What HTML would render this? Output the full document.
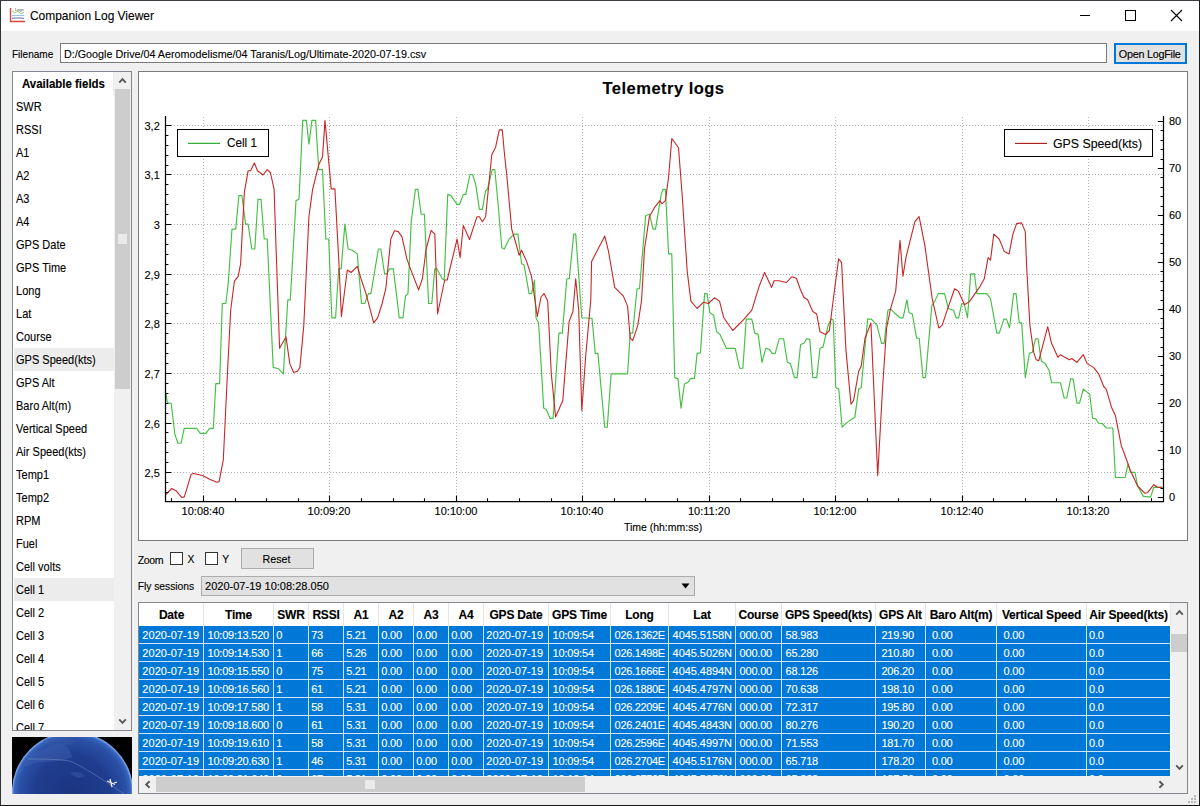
<!DOCTYPE html>
<html><head><meta charset="utf-8"><style>
html,body{margin:0;padding:0;width:1200px;height:806px;overflow:hidden;background:#f0f0f0}
.r{position:absolute}
.t{position:absolute;white-space:nowrap;font-family:"Liberation Sans", sans-serif;-webkit-text-stroke:0.12px currentColor}
</style></head><body>
<div class="r" style="left:0px;top:0px;width:1200px;height:806px;background:#f0f0f0;"></div>
<div class="r" style="left:1px;top:1px;width:1198px;height:30px;background:#ffffff;"></div>
<div class="r" style="left:0px;top:0px;width:1200px;height:1px;background:#3a3c44;"></div>
<div class="r" style="left:0px;top:0px;width:1px;height:806px;background:#2c3438;"></div>
<div class="r" style="left:1199px;top:0px;width:1px;height:806px;background:#1c1c1c;"></div>
<div class="r" style="left:0px;top:805px;width:1200px;height:1px;background:#141414;"></div>
<svg class="r" style="left:8px;top:6px" width="20" height="18" viewBox="0 0 20 18">
<path d="M2.5 2 V15.5 H17" stroke="#d64545" stroke-width="1.4" fill="none"/>
<path d="M4 5 L7 7 L10 5 L13 8 L16 6" stroke="#8fd08f" stroke-width="1" fill="none"/>
<path d="M4 9.5 H16" stroke="#8fc8e8" stroke-width="1" fill="none"/>
<path d="M4 12.5 L6 12 H14 L16 12.5" stroke="#5060a0" stroke-width="0.9" fill="none"/>
<text x="7" y="5" font-size="4" font-family="Liberation Sans" fill="#444">Logs</text>
</svg>
<div class="t" style="left:30.00px;top:10.89px;font-size:11.95px;line-height:11.95px;font-weight:400;color:#000;letter-spacing:0.000px">Companion Log Viewer</div>
<div class="r" style="left:1080px;top:15px;width:10px;height:1px;background:#000;"></div>
<div class="r" style="left:1125px;top:10px;width:11px;height:11px;border:1px solid #000;box-sizing:border-box;"></div>
<svg class="r" style="left:1170px;top:9px" width="13" height="13" viewBox="0 0 13 13"><path d="M1 1 L12 12 M12 1 L1 12" stroke="#000" stroke-width="1.1"/></svg>
<div class="t" style="left:11.80px;top:49.33px;font-size:10.72px;line-height:10.72px;font-weight:400;color:#000;letter-spacing:0.000px;transform:scaleX(0.9346);transform-origin:0 0">Filename</div>
<div class="r" style="left:60px;top:43px;width:1047px;height:20px;background:#fff;border:1px solid #7a7a7a;box-sizing:border-box;"></div>
<div class="t" style="left:63.50px;top:48.92px;font-size:11.20px;line-height:11.20px;font-weight:400;color:#000;letter-spacing:0.000px;transform:scaleX(0.9615);transform-origin:0 0">D:/Google Drive/04 Aeromodelisme/04 Taranis/Log/Ultimate-2020-07-19.csv</div>
<div class="r" style="left:1114px;top:43px;width:73px;height:21px;background:#e1e1e1;border:2px solid #0078d7;box-sizing:border-box;"></div>
<div class="t" style="left:1118.80px;top:49.16px;font-size:10.80px;line-height:10.80px;font-weight:400;color:#000;letter-spacing:-0.252px">Open LogFile</div>
<div class="r" style="left:12px;top:71px;width:120px;height:660px;background:#fff;border:1px solid #828790;box-sizing:border-box;"></div>
<div class="r" style="left:113px;top:72px;width:1px;height:23px;background:#ececec;"></div>
<div class="t" style="left:22.20px;top:77.93px;font-size:12.60px;line-height:12.60px;font-weight:700;color:#000;letter-spacing:0.000px;transform:scaleX(0.9091);transform-origin:0 0">Available fields</div>
<div class="r" style="left:14px;top:348px;width:100px;height:23px;background:#ececec;"></div>
<div class="r" style="left:14px;top:578px;width:100px;height:23px;background:#ececec;"></div>
<div class="r" style="left:13px;top:95px;width:101px;height:635px;overflow:hidden">
<div class="t" style="left:3.20px;top:5.57px;font-size:12.32px;line-height:12.32px;font-weight:400;color:#000;letter-spacing:0.022px;transform:scaleX(0.8929);transform-origin:0 0">SWR</div>
<div class="t" style="left:3.20px;top:28.57px;font-size:12.32px;line-height:12.32px;font-weight:400;color:#000;letter-spacing:0.022px;transform:scaleX(0.8929);transform-origin:0 0">RSSI</div>
<div class="t" style="left:3.20px;top:51.57px;font-size:12.32px;line-height:12.32px;font-weight:400;color:#000;letter-spacing:0.022px;transform:scaleX(0.8929);transform-origin:0 0">A1</div>
<div class="t" style="left:3.20px;top:74.57px;font-size:12.32px;line-height:12.32px;font-weight:400;color:#000;letter-spacing:0.022px;transform:scaleX(0.8929);transform-origin:0 0">A2</div>
<div class="t" style="left:3.20px;top:97.57px;font-size:12.32px;line-height:12.32px;font-weight:400;color:#000;letter-spacing:0.022px;transform:scaleX(0.8929);transform-origin:0 0">A3</div>
<div class="t" style="left:3.20px;top:120.57px;font-size:12.32px;line-height:12.32px;font-weight:400;color:#000;letter-spacing:0.022px;transform:scaleX(0.8929);transform-origin:0 0">A4</div>
<div class="t" style="left:3.20px;top:143.57px;font-size:12.32px;line-height:12.32px;font-weight:400;color:#000;letter-spacing:0.022px;transform:scaleX(0.8929);transform-origin:0 0">GPS Date</div>
<div class="t" style="left:3.20px;top:166.57px;font-size:12.32px;line-height:12.32px;font-weight:400;color:#000;letter-spacing:0.022px;transform:scaleX(0.8929);transform-origin:0 0">GPS Time</div>
<div class="t" style="left:3.20px;top:189.57px;font-size:12.32px;line-height:12.32px;font-weight:400;color:#000;letter-spacing:0.022px;transform:scaleX(0.8929);transform-origin:0 0">Long</div>
<div class="t" style="left:3.20px;top:212.57px;font-size:12.32px;line-height:12.32px;font-weight:400;color:#000;letter-spacing:0.022px;transform:scaleX(0.8929);transform-origin:0 0">Lat</div>
<div class="t" style="left:3.20px;top:235.57px;font-size:12.32px;line-height:12.32px;font-weight:400;color:#000;letter-spacing:0.022px;transform:scaleX(0.8929);transform-origin:0 0">Course</div>
<div class="t" style="left:3.20px;top:258.57px;font-size:12.32px;line-height:12.32px;font-weight:400;color:#000;letter-spacing:0.022px;transform:scaleX(0.8929);transform-origin:0 0">GPS Speed(kts)</div>
<div class="t" style="left:3.20px;top:281.57px;font-size:12.32px;line-height:12.32px;font-weight:400;color:#000;letter-spacing:0.022px;transform:scaleX(0.8929);transform-origin:0 0">GPS Alt</div>
<div class="t" style="left:3.20px;top:304.57px;font-size:12.32px;line-height:12.32px;font-weight:400;color:#000;letter-spacing:0.022px;transform:scaleX(0.8929);transform-origin:0 0">Baro Alt(m)</div>
<div class="t" style="left:3.20px;top:327.57px;font-size:12.32px;line-height:12.32px;font-weight:400;color:#000;letter-spacing:0.022px;transform:scaleX(0.8929);transform-origin:0 0">Vertical Speed</div>
<div class="t" style="left:3.20px;top:350.57px;font-size:12.32px;line-height:12.32px;font-weight:400;color:#000;letter-spacing:0.022px;transform:scaleX(0.8929);transform-origin:0 0">Air Speed(kts)</div>
<div class="t" style="left:3.20px;top:373.57px;font-size:12.32px;line-height:12.32px;font-weight:400;color:#000;letter-spacing:0.022px;transform:scaleX(0.8929);transform-origin:0 0">Temp1</div>
<div class="t" style="left:3.20px;top:396.57px;font-size:12.32px;line-height:12.32px;font-weight:400;color:#000;letter-spacing:0.022px;transform:scaleX(0.8929);transform-origin:0 0">Temp2</div>
<div class="t" style="left:3.20px;top:419.57px;font-size:12.32px;line-height:12.32px;font-weight:400;color:#000;letter-spacing:0.022px;transform:scaleX(0.8929);transform-origin:0 0">RPM</div>
<div class="t" style="left:3.20px;top:442.57px;font-size:12.32px;line-height:12.32px;font-weight:400;color:#000;letter-spacing:0.022px;transform:scaleX(0.8929);transform-origin:0 0">Fuel</div>
<div class="t" style="left:3.20px;top:465.57px;font-size:12.32px;line-height:12.32px;font-weight:400;color:#000;letter-spacing:0.022px;transform:scaleX(0.8929);transform-origin:0 0">Cell volts</div>
<div class="t" style="left:3.20px;top:488.57px;font-size:12.32px;line-height:12.32px;font-weight:400;color:#000;letter-spacing:0.022px;transform:scaleX(0.8929);transform-origin:0 0">Cell 1</div>
<div class="t" style="left:3.20px;top:511.57px;font-size:12.32px;line-height:12.32px;font-weight:400;color:#000;letter-spacing:0.022px;transform:scaleX(0.8929);transform-origin:0 0">Cell 2</div>
<div class="t" style="left:3.20px;top:534.57px;font-size:12.32px;line-height:12.32px;font-weight:400;color:#000;letter-spacing:0.022px;transform:scaleX(0.8929);transform-origin:0 0">Cell 3</div>
<div class="t" style="left:3.20px;top:557.57px;font-size:12.32px;line-height:12.32px;font-weight:400;color:#000;letter-spacing:0.022px;transform:scaleX(0.8929);transform-origin:0 0">Cell 4</div>
<div class="t" style="left:3.20px;top:580.57px;font-size:12.32px;line-height:12.32px;font-weight:400;color:#000;letter-spacing:0.022px;transform:scaleX(0.8929);transform-origin:0 0">Cell 5</div>
<div class="t" style="left:3.20px;top:603.57px;font-size:12.32px;line-height:12.32px;font-weight:400;color:#000;letter-spacing:0.022px;transform:scaleX(0.8929);transform-origin:0 0">Cell 6</div>
<div class="t" style="left:3.20px;top:626.57px;font-size:12.32px;line-height:12.32px;font-weight:400;color:#000;letter-spacing:0.022px;transform:scaleX(0.8929);transform-origin:0 0">Cell 7</div>
</div>
<div class="r" style="left:114px;top:72px;width:17px;height:658px;background:#f0f0f0;"></div>
<div class="r" style="left:115px;top:89px;width:15px;height:300px;background:#cdcdcd;"></div>
<div class="r" style="left:118px;top:234px;width:9px;height:10px;background:#eaeaea;"></div>
<svg class="r" style="left:117px;top:77px" width="11" height="7" viewBox="0 0 11 7"><path d="M2.2 5.6 L5.5 2.2 L8.8 5.6" stroke="#585858" stroke-width="1.9" fill="none"/></svg>
<svg class="r" style="left:117px;top:718px" width="11" height="7" viewBox="0 0 11 7"><path d="M2.2 1.4 L5.5 4.8 L8.8 1.4" stroke="#585858" stroke-width="1.9" fill="none"/></svg>
<svg class="r" style="left:12px;top:737px" width="120" height="57" viewBox="0 0 120 57">
<defs><radialGradient id="gl" cx="60.6" cy="55.6" r="60.7" gradientUnits="userSpaceOnUse">
<stop offset="0" stop-color="#1b3580"/><stop offset="0.6" stop-color="#1f3c8e"/><stop offset="0.88" stop-color="#2a50a6"/><stop offset="0.96" stop-color="#3766c0"/><stop offset="1" stop-color="#8fb6f4"/></radialGradient>
<clipPath id="gc"><circle cx="60.6" cy="55.6" r="60.7"/></clipPath></defs>
<rect width="120" height="57" fill="#000"/>
<circle cx="60.6" cy="55.6" r="60.7" fill="url(#gl)"/>
<g clip-path="url(#gc)">
<path d="M10 26 C18 18 28 12 42 8 C52 6 58 10 60 20 C52 25 38 24 22 26 C16 29 12 32 10 26 Z" fill="#3e5eae" opacity="0.5"/>
<path d="M30 2 C40 0 52 0 64 3 C62 8 54 10 44 9 C36 8 32 6 30 2 Z" fill="#3a5aa8" opacity="0.4"/>
<path d="M58 36 C62 34 70 35 73 39 C69 42 62 41 58 36 Z" fill="#3858aa" opacity="0.5"/>
<path d="M16 22 C30 22 45 22 58 24 C72 30 90 42 112 57" stroke="#9ab0dc" stroke-width="0.45" fill="none" opacity="0.8"/>
</g>
<path d="M95 44 L103 47.5 M98 42 L100 50 M102 46 L105 45" stroke="#f4f4f4" stroke-width="1.3"/>
</svg>
<div class="r" style="left:138px;top:71px;width:1050px;height:470px;background:#fff;border:1px solid #7a7a7a;box-sizing:border-box;"></div>
<div class="t" style="left:663.50px;top:79.83px;font-size:16.50px;line-height:16.50px;font-weight:700;color:#000;letter-spacing:0.483px;transform:translateX(-50%);transform-origin:50% 0">Telemetry logs</div>
<svg class="r" style="left:0;top:0" width="1200" height="806" viewBox="0 0 1200 806">
<line x1="203.5" y1="117" x2="203.5" y2="500" stroke="#b2b2b2" stroke-width="1" stroke-dasharray="1 2"/>
<line x1="329.5" y1="117" x2="329.5" y2="500" stroke="#b2b2b2" stroke-width="1" stroke-dasharray="1 2"/>
<line x1="456.5" y1="117" x2="456.5" y2="500" stroke="#b2b2b2" stroke-width="1" stroke-dasharray="1 2"/>
<line x1="582.5" y1="117" x2="582.5" y2="500" stroke="#b2b2b2" stroke-width="1" stroke-dasharray="1 2"/>
<line x1="709.5" y1="117" x2="709.5" y2="500" stroke="#b2b2b2" stroke-width="1" stroke-dasharray="1 2"/>
<line x1="835.5" y1="117" x2="835.5" y2="500" stroke="#b2b2b2" stroke-width="1" stroke-dasharray="1 2"/>
<line x1="962.5" y1="117" x2="962.5" y2="500" stroke="#b2b2b2" stroke-width="1" stroke-dasharray="1 2"/>
<line x1="1088.5" y1="117" x2="1088.5" y2="500" stroke="#b2b2b2" stroke-width="1" stroke-dasharray="1 2"/>
<line x1="168" y1="125.5" x2="1162" y2="125.5" stroke="#b2b2b2" stroke-width="1" stroke-dasharray="1 2"/>
<line x1="168" y1="174.5" x2="1162" y2="174.5" stroke="#b2b2b2" stroke-width="1" stroke-dasharray="1 2"/>
<line x1="168" y1="224.5" x2="1162" y2="224.5" stroke="#b2b2b2" stroke-width="1" stroke-dasharray="1 2"/>
<line x1="168" y1="274.5" x2="1162" y2="274.5" stroke="#b2b2b2" stroke-width="1" stroke-dasharray="1 2"/>
<line x1="168" y1="323.5" x2="1162" y2="323.5" stroke="#b2b2b2" stroke-width="1" stroke-dasharray="1 2"/>
<line x1="168" y1="373.5" x2="1162" y2="373.5" stroke="#b2b2b2" stroke-width="1" stroke-dasharray="1 2"/>
<line x1="168" y1="423.5" x2="1162" y2="423.5" stroke="#b2b2b2" stroke-width="1" stroke-dasharray="1 2"/>
<line x1="168" y1="472.5" x2="1162" y2="472.5" stroke="#b2b2b2" stroke-width="1" stroke-dasharray="1 2"/>
<polyline points="166.0,394.2 167.4,402.9 171.2,403.3 174.9,434.5 178.0,443.2 181.1,443.2 184.2,428.3 196.6,428.3 200.3,433.3 205.9,433.3 209.6,428.3 213.3,428.3 215.8,383.6 219.6,383.6 222.3,303.5 225.8,303.5 228.2,283.7 232.0,229.1 235.7,229.1 238.9,195.6 241.9,195.6 245.6,224.1 248.1,224.1 251.8,249.0 254.8,249.0 258.0,199.3 261.0,199.3 264.2,239.0 267.2,239.0 273.2,367.4 278.3,368.7 283.4,373.8 284.7,350.9 287.8,299.8 290.3,299.8 296.0,200.6 299.0,199.3 302.7,120.4 306.4,120.4 308.9,144.2 311.9,120.4 315.6,120.4 318.8,169.6 322.5,169.6 325.8,239.0 328.7,239.0 331.8,317.8 335.6,317.8 338.7,268.8 341.1,268.8 344.9,224.1 348.1,249.0 352.3,250.2 357.3,253.9 358.5,268.8 361.5,303.5 364.7,303.5 368.4,293.6 370.9,293.6 378.4,249.0 380.8,249.0 384.6,273.8 387.0,273.8 389.5,268.8 393.3,268.8 397.0,298.6 399.2,317.8 403.0,317.8 405.5,296.0 408.0,293.6 411.2,221.7 415.4,189.4 417.9,189.4 421.1,214.2 424.4,214.2 428.6,303.5 431.8,303.5 434.8,268.8 436.8,268.8 442.2,278.7 444.2,280.0 447.7,194.4 450.9,195.6 457.1,204.3 459.6,204.3 463.3,194.4 465.8,194.4 470.0,174.5 472.5,174.5 475.7,184.4 479.4,209.3 482.4,209.3 485.6,190.6 487.4,189.4 492.3,169.6 494.8,169.6 498.1,204.3 501.8,247.7 504.3,249.0 509.2,239.0 514.2,234.1 517.9,234.1 521.6,263.8 524.1,265.1 529.1,293.6 531.5,293.6 534.5,280.0 536.0,317.8 538.6,322.9 543.7,408.1 546.2,409.4 550.0,418.3 553.1,418.3 558.9,333.1 562.3,333.1 566.8,278.7 569.3,278.7 573.7,234.1 575.7,234.1 581.8,317.8 592.0,318.3 595.3,353.4 597.9,353.4 604.7,427.2 607.3,427.2 611.1,373.8 627.6,373.8 630.2,333.1 632.7,333.1 637.0,288.7 639.5,288.7 645.7,215.5 649.4,214.2 653.1,229.1 655.5,229.1 661.2,194.4 662.9,189.4 665.4,189.4 668.6,253.9 671.8,253.9 674.7,377.6 678.0,378.9 681.0,408.1 684.4,384.0 688.2,381.9 690.7,378.4 694.5,378.4 697.1,353.4 700.4,352.9 704.6,293.6 707.1,293.6 709.8,312.7 713.6,315.3 716.7,331.8 720.0,334.4 726.3,348.3 735.2,348.3 739.6,368.2 742.9,368.2 746.2,319.1 751.8,319.1 754.8,333.1 758.1,334.4 762.0,362.3 765.8,348.3 769.6,349.6 772.1,353.4 775.2,353.4 779.3,338.7 783.6,338.7 787.4,362.3 790.5,363.6 794.5,377.6 797.1,377.6 800.6,344.5 803.9,343.3 806.5,338.7 809.8,339.4 812.8,377.6 816.7,377.6 820.0,348.3 823.0,347.1 828.1,325.4 831.2,319.1 833.2,319.8 835.8,387.8 838.8,389.1 842.1,427.2 845.9,423.4 851.0,419.6 854.8,417.6 858.7,389.1 861.2,387.8 867.6,319.1 871.4,319.1 877.0,325.4 881.6,343.3 884.1,343.3 887.9,310.2 890.5,308.9 894.3,312.7 900.1,317.8 903.1,317.8 906.9,299.8 909.0,312.7 912.3,314.0 916.6,338.2 919.2,338.2 923.0,377.6 925.5,377.6 931.9,305.1 933.5,303.5 938.4,293.6 944.6,293.6 948.3,308.5 953.5,310.2 956.1,317.8 958.6,317.8 961.7,303.8 964.2,303.8 967.5,317.8 970.7,273.8 974.4,273.8 976.9,293.6 986.8,293.6 990.5,298.6 996.8,333.1 999.3,333.1 1003.9,319.1 1006.5,319.1 1009.5,328.0 1013.6,293.6 1016.1,293.6 1019.2,322.9 1021.7,322.9 1025.3,377.6 1029.4,353.4 1032.4,352.2 1035.5,338.7 1038.0,338.7 1041.3,361.1 1045.1,363.6 1048.9,370.0 1051.5,382.7 1060.4,382.7 1064.2,398.0 1066.8,398.0 1070.6,378.9 1073.1,378.9 1076.9,403.1 1079.5,403.1 1083.3,389.1 1089.7,394.1 1092.6,418.2 1095.9,418.9 1098.5,423.2 1102.4,423.5 1106.3,428.0 1112.8,428.0 1115.4,477.5 1125.2,477.5 1128.0,463.8 1130.4,472.3 1135.0,472.3 1137.6,486.0 1143.4,496.4 1150.6,497.1 1153.8,487.3 1162.3,487.3" fill="none" stroke="#44c044" stroke-width="1.15" stroke-linejoin="round"/>
<polyline points="165.6,494.8 171.6,488.5 176.4,491.1 181.7,497.4 184.3,496.9 191.2,474.2 193.8,473.5 203.3,475.8 210.1,479.5 217.0,482.2 219.1,481.6 223.3,460.0 227.6,370.0 230.7,310.0 234.4,281.2 238.2,276.3 240.6,263.8 244.4,191.9 248.1,170.8 250.6,170.8 254.3,162.9 257.5,170.8 263.0,175.0 267.2,169.6 270.4,172.5 274.1,189.4 276.1,249.0 279.6,348.3 286.0,336.9 289.8,363.6 293.6,372.5 297.4,371.2 299.9,367.4 303.8,325.4 308.9,216.7 312.6,189.4 318.8,164.6 322.5,157.1 325.0,120.4 331.2,188.9 334.9,188.9 338.7,258.9 341.4,316.5 347.3,270.0 351.1,272.5 357.3,266.3 361.0,278.7 366.0,293.6 373.7,322.9 377.6,317.8 382.1,303.5 385.8,288.7 390.8,239.0 394.5,230.8 398.2,231.6 401.9,236.6 406.9,258.9 410.0,267.6 418.6,289.9 422.4,278.7 426.1,249.0 431.1,230.3 434.8,234.1 437.6,314.0 444.7,280.0 447.2,280.0 457.1,239.0 460.1,257.6 463.3,225.4 469.5,239.5 477.0,216.7 479.4,216.7 482.4,221.7 485.6,216.7 491.8,154.7 495.6,147.2 499.3,129.9 502.3,129.9 504.3,152.2 506.7,174.5 511.7,229.1 515.4,241.5 519.1,255.2 521.6,250.2 526.6,261.4 531.5,276.3 537.3,316.5 541.0,297.0 544.0,293.6 547.7,301.1 551.3,373.8 555.6,417.0 562.8,400.5 569.1,321.6 572.9,311.5 575.7,278.7 578.7,310.0 581.8,410.7 585.7,356.0 590.8,300.0 591.6,261.4 604.8,236.1 608.5,251.4 614.7,287.4 623.4,296.1 627.6,306.4 630.2,338.2 632.7,340.7 637.8,325.4 641.6,300.0 644.5,249.0 649.4,216.7 655.0,206.8 659.9,200.6 661.9,203.8 665.4,200.6 668.6,177.0 671.8,138.5 678.5,147.7 682.3,196.8 687.2,271.3 690.9,301.1 697.1,308.5 703.3,302.3 708.3,303.5 714.5,297.8 719.5,301.1 723.8,317.8 732.7,330.5 744.1,319.1 751.8,310.2 759.2,286.2 764.6,272.5 771.6,287.4 774.1,280.7 779.0,280.7 786.5,282.5 791.9,276.7 796.4,278.2 800.1,288.7 803.8,297.3 807.6,299.8 812.8,311.5 816.7,314.0 820.0,331.8 825.6,334.4 829.4,330.5 833.2,300.0 838.6,258.9 841.6,262.6 845.9,349.6 851.0,404.3 853.6,400.5 858.7,371.2 861.2,366.2 865.0,338.2 870.9,322.9 877.7,475.6 882.8,384.0 886.6,328.0 890.5,308.9 895.7,291.1 900.0,240.3 902.9,276.3 906.2,256.4 914.9,221.7 919.1,216.7 924.8,245.2 932.2,298.6 938.8,328.0 942.1,325.4 947.2,310.2 954.6,288.7 958.3,291.1 964.5,304.8 969.4,301.6 979.4,287.4 984.3,278.7 988.1,257.6 990.5,260.1 993.8,234.1 999.2,239.0 1004.2,251.4 1009.1,253.9 1012.9,234.1 1016.6,223.6 1021.5,222.9 1025.3,231.6 1026.5,263.8 1029.9,325.4 1033.7,352.2 1036.2,359.8 1038.8,360.6 1047.7,326.7 1051.5,343.3 1057.9,357.3 1060.4,354.7 1069.3,359.8 1071.8,358.5 1076.9,362.3 1083.3,354.7 1087.1,363.6 1093.5,367.4 1098.6,373.8 1103.7,386.5 1106.2,389.1 1111.5,407.2 1115.4,415.6 1121.3,445.6 1125.2,456.0 1130.4,470.4 1137.6,486.0 1144.7,493.2 1147.3,492.8 1153.8,484.7 1157.1,487.0 1162.3,487.6" fill="none" stroke="#c82626" stroke-width="1.1" stroke-linejoin="round"/>
<path d="M165.5 116 V502 M165 501.5 H1164 M1163.5 116 V502" stroke="#000" stroke-width="1.25" fill="none"/>
<path d="M166 125.5 H171.3 M166 135.5 H168.4 M166 145.5 H168.4 M166 155.5 H168.4 M166 165.5 H168.4 M166 174.5 H171.3 M166 184.5 H168.4 M166 194.5 H168.4 M166 204.5 H168.4 M166 214.5 H168.4 M166 224.5 H171.3 M166 234.5 H168.4 M166 244.5 H168.4 M166 254.5 H168.4 M166 264.5 H168.4 M166 274.5 H171.3 M166 284.5 H168.4 M166 294.5 H168.4 M166 303.5 H168.4 M166 313.5 H168.4 M166 323.5 H171.3 M166 333.5 H168.4 M166 343.5 H168.4 M166 353.5 H168.4 M166 363.5 H168.4 M166 373.5 H171.3 M166 383.5 H168.4 M166 393.5 H168.4 M166 403.5 H168.4 M166 413.5 H168.4 M166 423.5 H171.3 M166 432.5 H168.4 M166 442.5 H168.4 M166 452.5 H168.4 M166 462.5 H168.4 M166 472.5 H171.3 M166 482.5 H168.4 M166 492.5 H168.4 M1163 497.5 H1157.8 M1163 488.5 H1160.5 M1163 478.5 H1160.5 M1163 469.5 H1160.5 M1163 459.5 H1160.5 M1163 450.5 H1157.8 M1163 441.5 H1160.5 M1163 431.5 H1160.5 M1163 422.5 H1160.5 M1163 412.5 H1160.5 M1163 403.5 H1157.8 M1163 394.5 H1160.5 M1163 384.5 H1160.5 M1163 375.5 H1160.5 M1163 365.5 H1160.5 M1163 356.5 H1157.8 M1163 347.5 H1160.5 M1163 337.5 H1160.5 M1163 328.5 H1160.5 M1163 318.5 H1160.5 M1163 309.5 H1157.8 M1163 300.5 H1160.5 M1163 290.5 H1160.5 M1163 281.5 H1160.5 M1163 271.5 H1160.5 M1163 262.5 H1157.8 M1163 253.5 H1160.5 M1163 243.5 H1160.5 M1163 234.5 H1160.5 M1163 224.5 H1160.5 M1163 215.5 H1157.8 M1163 206.5 H1160.5 M1163 196.5 H1160.5 M1163 187.5 H1160.5 M1163 177.5 H1160.5 M1163 168.5 H1157.8 M1163 159.5 H1160.5 M1163 149.5 H1160.5 M1163 140.5 H1160.5 M1163 130.5 H1160.5 M1163 121.5 H1157.8 M171.5 501 V498.3 M203.5 501 V495.8 M235.5 501 V498.3 M266.5 501 V498.3 M298.5 501 V498.3 M329.5 501 V495.8 M361.5 501 V498.3 M393.5 501 V498.3 M424.5 501 V498.3 M456.5 501 V495.8 M487.5 501 V498.3 M519.5 501 V498.3 M551.5 501 V498.3 M582.5 501 V495.8 M614.5 501 V498.3 M645.5 501 V498.3 M677.5 501 V498.3 M709.5 501 V495.8 M740.5 501 V498.3 M772.5 501 V498.3 M803.5 501 V498.3 M835.5 501 V495.8 M867.5 501 V498.3 M898.5 501 V498.3 M930.5 501 V498.3 M962.5 501 V495.8 M993.5 501 V498.3 M1025.5 501 V498.3 M1056.5 501 V498.3 M1088.5 501 V495.8 M1120.5 501 V498.3 M1151.5 501 V498.3" stroke="#000" stroke-width="1.1" fill="none"/>
</svg>
<div class="t" style="left:159.80px;top:120.59px;font-size:11.00px;line-height:11.00px;font-weight:400;color:#000;letter-spacing:0.000px;transform:translateX(-100%);transform-origin:100% 0">3,2</div>
<div class="t" style="left:159.80px;top:169.59px;font-size:11.00px;line-height:11.00px;font-weight:400;color:#000;letter-spacing:0.000px;transform:translateX(-100%);transform-origin:100% 0">3,1</div>
<div class="t" style="left:159.80px;top:219.59px;font-size:11.00px;line-height:11.00px;font-weight:400;color:#000;letter-spacing:0.000px;transform:translateX(-100%);transform-origin:100% 0">3</div>
<div class="t" style="left:159.80px;top:269.59px;font-size:11.00px;line-height:11.00px;font-weight:400;color:#000;letter-spacing:0.000px;transform:translateX(-100%);transform-origin:100% 0">2,9</div>
<div class="t" style="left:159.80px;top:318.59px;font-size:11.00px;line-height:11.00px;font-weight:400;color:#000;letter-spacing:0.000px;transform:translateX(-100%);transform-origin:100% 0">2,8</div>
<div class="t" style="left:159.80px;top:368.59px;font-size:11.00px;line-height:11.00px;font-weight:400;color:#000;letter-spacing:0.000px;transform:translateX(-100%);transform-origin:100% 0">2,7</div>
<div class="t" style="left:159.80px;top:418.59px;font-size:11.00px;line-height:11.00px;font-weight:400;color:#000;letter-spacing:0.000px;transform:translateX(-100%);transform-origin:100% 0">2,6</div>
<div class="t" style="left:159.80px;top:467.59px;font-size:11.00px;line-height:11.00px;font-weight:400;color:#000;letter-spacing:0.000px;transform:translateX(-100%);transform-origin:100% 0">2,5</div>
<div class="t" style="left:1169.00px;top:492.49px;font-size:11.00px;line-height:11.00px;font-weight:400;color:#000;letter-spacing:0.000px">0</div>
<div class="t" style="left:1169.00px;top:445.49px;font-size:11.00px;line-height:11.00px;font-weight:400;color:#000;letter-spacing:0.000px">10</div>
<div class="t" style="left:1169.00px;top:398.49px;font-size:11.00px;line-height:11.00px;font-weight:400;color:#000;letter-spacing:0.000px">20</div>
<div class="t" style="left:1169.00px;top:351.49px;font-size:11.00px;line-height:11.00px;font-weight:400;color:#000;letter-spacing:0.000px">30</div>
<div class="t" style="left:1169.00px;top:304.49px;font-size:11.00px;line-height:11.00px;font-weight:400;color:#000;letter-spacing:0.000px">40</div>
<div class="t" style="left:1169.00px;top:257.49px;font-size:11.00px;line-height:11.00px;font-weight:400;color:#000;letter-spacing:0.000px">50</div>
<div class="t" style="left:1169.00px;top:210.49px;font-size:11.00px;line-height:11.00px;font-weight:400;color:#000;letter-spacing:0.000px">60</div>
<div class="t" style="left:1169.00px;top:163.49px;font-size:11.00px;line-height:11.00px;font-weight:400;color:#000;letter-spacing:0.000px">70</div>
<div class="t" style="left:1169.00px;top:116.49px;font-size:11.00px;line-height:11.00px;font-weight:400;color:#000;letter-spacing:0.000px">80</div>
<div class="t" style="left:203.00px;top:505.89px;font-size:11.00px;line-height:11.00px;font-weight:400;color:#000;letter-spacing:0.000px;transform:translateX(-50%);transform-origin:50% 0">10:08:40</div>
<div class="t" style="left:329.00px;top:505.89px;font-size:11.00px;line-height:11.00px;font-weight:400;color:#000;letter-spacing:0.000px;transform:translateX(-50%);transform-origin:50% 0">10:09:20</div>
<div class="t" style="left:456.00px;top:505.89px;font-size:11.00px;line-height:11.00px;font-weight:400;color:#000;letter-spacing:0.000px;transform:translateX(-50%);transform-origin:50% 0">10:10:00</div>
<div class="t" style="left:582.00px;top:505.89px;font-size:11.00px;line-height:11.00px;font-weight:400;color:#000;letter-spacing:0.000px;transform:translateX(-50%);transform-origin:50% 0">10:10:40</div>
<div class="t" style="left:709.00px;top:505.89px;font-size:11.00px;line-height:11.00px;font-weight:400;color:#000;letter-spacing:0.000px;transform:translateX(-50%);transform-origin:50% 0">10:11:20</div>
<div class="t" style="left:835.00px;top:505.89px;font-size:11.00px;line-height:11.00px;font-weight:400;color:#000;letter-spacing:0.000px;transform:translateX(-50%);transform-origin:50% 0">10:12:00</div>
<div class="t" style="left:962.00px;top:505.89px;font-size:11.00px;line-height:11.00px;font-weight:400;color:#000;letter-spacing:0.000px;transform:translateX(-50%);transform-origin:50% 0">10:12:40</div>
<div class="t" style="left:1088.00px;top:505.89px;font-size:11.00px;line-height:11.00px;font-weight:400;color:#000;letter-spacing:0.000px;transform:translateX(-50%);transform-origin:50% 0">10:13:20</div>
<div class="t" style="left:663.00px;top:522.62px;font-size:10.49px;line-height:10.49px;font-weight:400;color:#000;letter-spacing:0.000px;transform:translateX(-50%);transform-origin:50% 0">Time (hh:mm:ss)</div>
<div class="r" style="left:177px;top:129px;width:92px;height:28px;background:#fff;border:1px solid #000;box-sizing:border-box;"></div>
<div class="r" style="left:188px;top:143px;width:32px;height:1px;background:#3aa83a;"></div>
<div class="r" style="left:188px;top:142px;width:32px;height:1px;background:#c8f0c8;"></div>
<div class="t" style="left:226.70px;top:137.08px;font-size:12.90px;line-height:12.90px;font-weight:400;color:#000;letter-spacing:0.000px;transform:scaleX(0.9091);transform-origin:0 0">Cell 1</div>
<div class="r" style="left:1004px;top:129px;width:149px;height:28px;background:#fff;border:1px solid #000;box-sizing:border-box;"></div>
<div class="r" style="left:1015px;top:143px;width:32px;height:1px;background:#a82424;"></div>
<div class="r" style="left:1015px;top:142px;width:32px;height:1px;background:#f4d8d8;"></div>
<div class="t" style="left:1053.00px;top:136.53px;font-size:13.55px;line-height:13.55px;font-weight:400;color:#000;letter-spacing:0.000px;transform:scaleX(0.9091);transform-origin:0 0">GPS Speed(kts)</div>
<div class="t" style="left:137.80px;top:554.63px;font-size:10.60px;line-height:10.60px;font-weight:400;color:#000;letter-spacing:-0.423px">Zoom</div>
<div class="r" style="left:170px;top:552px;width:13px;height:13px;background:#fff;border:1px solid #333;box-sizing:border-box;"></div>
<div class="t" style="left:187.50px;top:554.68px;font-size:10.30px;line-height:10.30px;font-weight:400;color:#000;letter-spacing:0.000px">X</div>
<div class="r" style="left:205px;top:552px;width:13px;height:13px;background:#fff;border:1px solid #333;box-sizing:border-box;"></div>
<div class="t" style="left:222.30px;top:554.68px;font-size:10.30px;line-height:10.30px;font-weight:400;color:#000;letter-spacing:0.000px">Y</div>
<div class="r" style="left:241px;top:548px;width:73px;height:21px;background:#e1e1e1;border:1px solid #adadad;box-sizing:border-box;"></div>
<div class="t" style="left:262.50px;top:553.93px;font-size:10.71px;line-height:10.71px;font-weight:400;color:#000;letter-spacing:0.000px">Reset</div>
<div class="t" style="left:137.80px;top:581.68px;font-size:10.30px;line-height:10.30px;font-weight:400;color:#000;letter-spacing:-0.034px">Fly sessions</div>
<div class="r" style="left:201px;top:576px;width:494px;height:20px;background:#e1e1e1;border:1px solid #adadad;box-sizing:border-box;"></div>
<div class="t" style="left:205.00px;top:580.66px;font-size:11.04px;line-height:11.04px;font-weight:400;color:#000;letter-spacing:0.000px">2020-07-19 10:08:28.050</div>
<svg class="r" style="left:681px;top:583px" width="9" height="6" viewBox="0 0 9 6"><path d="M0.5 0.5 H8.5 L4.5 5.5 Z" fill="#000"/></svg>
<div class="r" style="left:138px;top:602px;width:1050px;height:192px;background:#fff;border:1px solid #828790;box-sizing:border-box;"></div>
<div class="r" style="left:139px;top:603px;width:1031px;height:23px;background:#fff;"></div>
<div class="t" style="left:171.50px;top:608.84px;font-size:12.00px;line-height:12.00px;font-weight:700;color:#000;letter-spacing:-0.200px;transform:translateX(-50%);transform-origin:50% 0">Date</div>
<div class="r" style="left:203px;top:603px;width:1px;height:23px;background:#e5e5e5;"></div>
<div class="t" style="left:238.50px;top:608.84px;font-size:12.00px;line-height:12.00px;font-weight:700;color:#000;letter-spacing:-0.200px;transform:translateX(-50%);transform-origin:50% 0">Time</div>
<div class="r" style="left:273px;top:603px;width:1px;height:23px;background:#e5e5e5;"></div>
<div class="t" style="left:291.00px;top:608.84px;font-size:12.00px;line-height:12.00px;font-weight:700;color:#000;letter-spacing:-0.200px;transform:translateX(-50%);transform-origin:50% 0">SWR</div>
<div class="r" style="left:308px;top:603px;width:1px;height:23px;background:#e5e5e5;"></div>
<div class="t" style="left:326.00px;top:608.84px;font-size:12.00px;line-height:12.00px;font-weight:700;color:#000;letter-spacing:-0.200px;transform:translateX(-50%);transform-origin:50% 0">RSSI</div>
<div class="r" style="left:343px;top:603px;width:1px;height:23px;background:#e5e5e5;"></div>
<div class="t" style="left:361.00px;top:608.84px;font-size:12.00px;line-height:12.00px;font-weight:700;color:#000;letter-spacing:-0.200px;transform:translateX(-50%);transform-origin:50% 0">A1</div>
<div class="r" style="left:378px;top:603px;width:1px;height:23px;background:#e5e5e5;"></div>
<div class="t" style="left:396.00px;top:608.84px;font-size:12.00px;line-height:12.00px;font-weight:700;color:#000;letter-spacing:-0.200px;transform:translateX(-50%);transform-origin:50% 0">A2</div>
<div class="r" style="left:413px;top:603px;width:1px;height:23px;background:#e5e5e5;"></div>
<div class="t" style="left:431.00px;top:608.84px;font-size:12.00px;line-height:12.00px;font-weight:700;color:#000;letter-spacing:-0.200px;transform:translateX(-50%);transform-origin:50% 0">A3</div>
<div class="r" style="left:448px;top:603px;width:1px;height:23px;background:#e5e5e5;"></div>
<div class="t" style="left:466.00px;top:608.84px;font-size:12.00px;line-height:12.00px;font-weight:700;color:#000;letter-spacing:-0.200px;transform:translateX(-50%);transform-origin:50% 0">A4</div>
<div class="r" style="left:483px;top:603px;width:1px;height:23px;background:#e5e5e5;"></div>
<div class="t" style="left:516.00px;top:608.84px;font-size:12.00px;line-height:12.00px;font-weight:700;color:#000;letter-spacing:-0.200px;transform:translateX(-50%);transform-origin:50% 0">GPS Date</div>
<div class="r" style="left:548px;top:603px;width:1px;height:23px;background:#e5e5e5;"></div>
<div class="t" style="left:579.50px;top:608.84px;font-size:12.00px;line-height:12.00px;font-weight:700;color:#000;letter-spacing:-0.200px;transform:translateX(-50%);transform-origin:50% 0">GPS Time</div>
<div class="r" style="left:610px;top:603px;width:1px;height:23px;background:#e5e5e5;"></div>
<div class="t" style="left:639.50px;top:608.84px;font-size:12.00px;line-height:12.00px;font-weight:700;color:#000;letter-spacing:-0.200px;transform:translateX(-50%);transform-origin:50% 0">Long</div>
<div class="r" style="left:668px;top:603px;width:1px;height:23px;background:#e5e5e5;"></div>
<div class="t" style="left:702.00px;top:608.84px;font-size:12.00px;line-height:12.00px;font-weight:700;color:#000;letter-spacing:-0.200px;transform:translateX(-50%);transform-origin:50% 0">Lat</div>
<div class="r" style="left:735px;top:603px;width:1px;height:23px;background:#e5e5e5;"></div>
<div class="t" style="left:758.50px;top:608.84px;font-size:12.00px;line-height:12.00px;font-weight:700;color:#000;letter-spacing:-0.200px;transform:translateX(-50%);transform-origin:50% 0">Course</div>
<div class="r" style="left:781px;top:603px;width:1px;height:23px;background:#e5e5e5;"></div>
<div class="t" style="left:828.50px;top:608.84px;font-size:12.00px;line-height:12.00px;font-weight:700;color:#000;letter-spacing:-0.200px;transform:translateX(-50%);transform-origin:50% 0">GPS Speed(kts)</div>
<div class="r" style="left:875px;top:603px;width:1px;height:23px;background:#e5e5e5;"></div>
<div class="t" style="left:900.50px;top:608.84px;font-size:12.00px;line-height:12.00px;font-weight:700;color:#000;letter-spacing:-0.200px;transform:translateX(-50%);transform-origin:50% 0">GPS Alt</div>
<div class="r" style="left:925px;top:603px;width:1px;height:23px;background:#e5e5e5;"></div>
<div class="t" style="left:961.00px;top:608.84px;font-size:12.00px;line-height:12.00px;font-weight:700;color:#000;letter-spacing:-0.200px;transform:translateX(-50%);transform-origin:50% 0">Baro Alt(m)</div>
<div class="r" style="left:996px;top:603px;width:1px;height:23px;background:#e5e5e5;"></div>
<div class="t" style="left:1041.50px;top:608.84px;font-size:12.00px;line-height:12.00px;font-weight:700;color:#000;letter-spacing:-0.200px;transform:translateX(-50%);transform-origin:50% 0">Vertical Speed</div>
<div class="r" style="left:1086px;top:603px;width:1px;height:23px;background:#e5e5e5;"></div>
<div class="t" style="left:1128.50px;top:608.84px;font-size:12.00px;line-height:12.00px;font-weight:700;color:#000;letter-spacing:-0.200px;transform:translateX(-50%);transform-origin:50% 0">Air Speed(kts)</div>
<div class="r" style="left:1170px;top:603px;width:1px;height:23px;background:#e5e5e5;"></div>
<div class="r" style="left:139px;top:626px;width:1031px;height:150px;overflow:hidden;background:#0078d7">
<div class="t" style="left:3.30px;top:4.29px;font-size:11.00px;line-height:11.00px;font-weight:400;color:#fff;letter-spacing:0.060px">2020-07-19</div>
<div class="t" style="left:68.60px;top:4.29px;font-size:11.00px;line-height:11.00px;font-weight:400;color:#fff;letter-spacing:-0.240px">10:09:13.520</div>
<div class="t" style="left:137.30px;top:4.29px;font-size:11.00px;line-height:11.00px;font-weight:400;color:#fff;letter-spacing:0.000px">0</div>
<div class="t" style="left:172.30px;top:4.29px;font-size:11.00px;line-height:11.00px;font-weight:400;color:#fff;letter-spacing:-0.300px">73</div>
<div class="t" style="left:207.30px;top:4.29px;font-size:11.00px;line-height:11.00px;font-weight:400;color:#fff;letter-spacing:-0.400px">5.21</div>
<div class="t" style="left:242.30px;top:4.29px;font-size:11.00px;line-height:11.00px;font-weight:400;color:#fff;letter-spacing:-0.200px">0.00</div>
<div class="t" style="left:277.30px;top:4.29px;font-size:11.00px;line-height:11.00px;font-weight:400;color:#fff;letter-spacing:-0.200px">0.00</div>
<div class="t" style="left:312.30px;top:4.29px;font-size:11.00px;line-height:11.00px;font-weight:400;color:#fff;letter-spacing:-0.200px">0.00</div>
<div class="t" style="left:347.30px;top:4.29px;font-size:11.00px;line-height:11.00px;font-weight:400;color:#fff;letter-spacing:0.060px">2020-07-19</div>
<div class="t" style="left:413.60px;top:4.29px;font-size:11.00px;line-height:11.00px;font-weight:400;color:#fff;letter-spacing:-0.200px">10:09:54</div>
<div class="t" style="left:475.60px;top:4.29px;font-size:11.00px;line-height:11.00px;font-weight:400;color:#fff;letter-spacing:-0.330px">026.1362E</div>
<div class="t" style="left:533.60px;top:4.29px;font-size:11.00px;line-height:11.00px;font-weight:400;color:#fff;letter-spacing:-0.060px">4045.5158N</div>
<div class="t" style="left:600.60px;top:4.29px;font-size:11.00px;line-height:11.00px;font-weight:400;color:#fff;letter-spacing:-0.200px">000.00</div>
<div class="t" style="left:646.60px;top:4.29px;font-size:11.00px;line-height:11.00px;font-weight:400;color:#fff;letter-spacing:-0.200px">58.983</div>
<div class="t" style="left:742.40px;top:4.29px;font-size:11.00px;line-height:11.00px;font-weight:400;color:#fff;letter-spacing:-0.200px">219.90</div>
<div class="t" style="left:792.90px;top:4.29px;font-size:11.00px;line-height:11.00px;font-weight:400;color:#fff;letter-spacing:-0.200px">0.00</div>
<div class="t" style="left:864.60px;top:4.29px;font-size:11.00px;line-height:11.00px;font-weight:400;color:#fff;letter-spacing:-0.200px">0.00</div>
<div class="t" style="left:950.00px;top:4.29px;font-size:11.00px;line-height:11.00px;font-weight:400;color:#fff;letter-spacing:-0.200px">0.0</div>
<div class="r" style="left:0px;top:17px;width:1031px;height:1px;background:#cde3f7;"></div>
<div class="t" style="left:3.30px;top:22.29px;font-size:11.00px;line-height:11.00px;font-weight:400;color:#fff;letter-spacing:0.060px">2020-07-19</div>
<div class="t" style="left:68.60px;top:22.29px;font-size:11.00px;line-height:11.00px;font-weight:400;color:#fff;letter-spacing:-0.240px">10:09:14.530</div>
<div class="t" style="left:137.30px;top:22.29px;font-size:11.00px;line-height:11.00px;font-weight:400;color:#fff;letter-spacing:0.000px">1</div>
<div class="t" style="left:172.30px;top:22.29px;font-size:11.00px;line-height:11.00px;font-weight:400;color:#fff;letter-spacing:-0.300px">66</div>
<div class="t" style="left:207.30px;top:22.29px;font-size:11.00px;line-height:11.00px;font-weight:400;color:#fff;letter-spacing:-0.400px">5.26</div>
<div class="t" style="left:242.30px;top:22.29px;font-size:11.00px;line-height:11.00px;font-weight:400;color:#fff;letter-spacing:-0.200px">0.00</div>
<div class="t" style="left:277.30px;top:22.29px;font-size:11.00px;line-height:11.00px;font-weight:400;color:#fff;letter-spacing:-0.200px">0.00</div>
<div class="t" style="left:312.30px;top:22.29px;font-size:11.00px;line-height:11.00px;font-weight:400;color:#fff;letter-spacing:-0.200px">0.00</div>
<div class="t" style="left:347.30px;top:22.29px;font-size:11.00px;line-height:11.00px;font-weight:400;color:#fff;letter-spacing:0.060px">2020-07-19</div>
<div class="t" style="left:413.60px;top:22.29px;font-size:11.00px;line-height:11.00px;font-weight:400;color:#fff;letter-spacing:-0.200px">10:09:54</div>
<div class="t" style="left:475.60px;top:22.29px;font-size:11.00px;line-height:11.00px;font-weight:400;color:#fff;letter-spacing:-0.330px">026.1498E</div>
<div class="t" style="left:533.60px;top:22.29px;font-size:11.00px;line-height:11.00px;font-weight:400;color:#fff;letter-spacing:-0.060px">4045.5026N</div>
<div class="t" style="left:600.60px;top:22.29px;font-size:11.00px;line-height:11.00px;font-weight:400;color:#fff;letter-spacing:-0.200px">000.00</div>
<div class="t" style="left:646.60px;top:22.29px;font-size:11.00px;line-height:11.00px;font-weight:400;color:#fff;letter-spacing:-0.200px">65.280</div>
<div class="t" style="left:742.40px;top:22.29px;font-size:11.00px;line-height:11.00px;font-weight:400;color:#fff;letter-spacing:-0.200px">210.80</div>
<div class="t" style="left:792.90px;top:22.29px;font-size:11.00px;line-height:11.00px;font-weight:400;color:#fff;letter-spacing:-0.200px">0.00</div>
<div class="t" style="left:864.60px;top:22.29px;font-size:11.00px;line-height:11.00px;font-weight:400;color:#fff;letter-spacing:-0.200px">0.00</div>
<div class="t" style="left:950.00px;top:22.29px;font-size:11.00px;line-height:11.00px;font-weight:400;color:#fff;letter-spacing:-0.200px">0.0</div>
<div class="r" style="left:0px;top:35px;width:1031px;height:1px;background:#cde3f7;"></div>
<div class="t" style="left:3.30px;top:40.29px;font-size:11.00px;line-height:11.00px;font-weight:400;color:#fff;letter-spacing:0.060px">2020-07-19</div>
<div class="t" style="left:68.60px;top:40.29px;font-size:11.00px;line-height:11.00px;font-weight:400;color:#fff;letter-spacing:-0.240px">10:09:15.550</div>
<div class="t" style="left:137.30px;top:40.29px;font-size:11.00px;line-height:11.00px;font-weight:400;color:#fff;letter-spacing:0.000px">0</div>
<div class="t" style="left:172.30px;top:40.29px;font-size:11.00px;line-height:11.00px;font-weight:400;color:#fff;letter-spacing:-0.300px">75</div>
<div class="t" style="left:207.30px;top:40.29px;font-size:11.00px;line-height:11.00px;font-weight:400;color:#fff;letter-spacing:-0.400px">5.21</div>
<div class="t" style="left:242.30px;top:40.29px;font-size:11.00px;line-height:11.00px;font-weight:400;color:#fff;letter-spacing:-0.200px">0.00</div>
<div class="t" style="left:277.30px;top:40.29px;font-size:11.00px;line-height:11.00px;font-weight:400;color:#fff;letter-spacing:-0.200px">0.00</div>
<div class="t" style="left:312.30px;top:40.29px;font-size:11.00px;line-height:11.00px;font-weight:400;color:#fff;letter-spacing:-0.200px">0.00</div>
<div class="t" style="left:347.30px;top:40.29px;font-size:11.00px;line-height:11.00px;font-weight:400;color:#fff;letter-spacing:0.060px">2020-07-19</div>
<div class="t" style="left:413.60px;top:40.29px;font-size:11.00px;line-height:11.00px;font-weight:400;color:#fff;letter-spacing:-0.200px">10:09:54</div>
<div class="t" style="left:475.60px;top:40.29px;font-size:11.00px;line-height:11.00px;font-weight:400;color:#fff;letter-spacing:-0.330px">026.1666E</div>
<div class="t" style="left:533.60px;top:40.29px;font-size:11.00px;line-height:11.00px;font-weight:400;color:#fff;letter-spacing:-0.060px">4045.4894N</div>
<div class="t" style="left:600.60px;top:40.29px;font-size:11.00px;line-height:11.00px;font-weight:400;color:#fff;letter-spacing:-0.200px">000.00</div>
<div class="t" style="left:646.60px;top:40.29px;font-size:11.00px;line-height:11.00px;font-weight:400;color:#fff;letter-spacing:-0.200px">68.126</div>
<div class="t" style="left:742.40px;top:40.29px;font-size:11.00px;line-height:11.00px;font-weight:400;color:#fff;letter-spacing:-0.200px">206.20</div>
<div class="t" style="left:792.90px;top:40.29px;font-size:11.00px;line-height:11.00px;font-weight:400;color:#fff;letter-spacing:-0.200px">0.00</div>
<div class="t" style="left:864.60px;top:40.29px;font-size:11.00px;line-height:11.00px;font-weight:400;color:#fff;letter-spacing:-0.200px">0.00</div>
<div class="t" style="left:950.00px;top:40.29px;font-size:11.00px;line-height:11.00px;font-weight:400;color:#fff;letter-spacing:-0.200px">0.0</div>
<div class="r" style="left:0px;top:53px;width:1031px;height:1px;background:#cde3f7;"></div>
<div class="t" style="left:3.30px;top:58.29px;font-size:11.00px;line-height:11.00px;font-weight:400;color:#fff;letter-spacing:0.060px">2020-07-19</div>
<div class="t" style="left:68.60px;top:58.29px;font-size:11.00px;line-height:11.00px;font-weight:400;color:#fff;letter-spacing:-0.240px">10:09:16.560</div>
<div class="t" style="left:137.30px;top:58.29px;font-size:11.00px;line-height:11.00px;font-weight:400;color:#fff;letter-spacing:0.000px">1</div>
<div class="t" style="left:172.30px;top:58.29px;font-size:11.00px;line-height:11.00px;font-weight:400;color:#fff;letter-spacing:-0.300px">61</div>
<div class="t" style="left:207.30px;top:58.29px;font-size:11.00px;line-height:11.00px;font-weight:400;color:#fff;letter-spacing:-0.400px">5.21</div>
<div class="t" style="left:242.30px;top:58.29px;font-size:11.00px;line-height:11.00px;font-weight:400;color:#fff;letter-spacing:-0.200px">0.00</div>
<div class="t" style="left:277.30px;top:58.29px;font-size:11.00px;line-height:11.00px;font-weight:400;color:#fff;letter-spacing:-0.200px">0.00</div>
<div class="t" style="left:312.30px;top:58.29px;font-size:11.00px;line-height:11.00px;font-weight:400;color:#fff;letter-spacing:-0.200px">0.00</div>
<div class="t" style="left:347.30px;top:58.29px;font-size:11.00px;line-height:11.00px;font-weight:400;color:#fff;letter-spacing:0.060px">2020-07-19</div>
<div class="t" style="left:413.60px;top:58.29px;font-size:11.00px;line-height:11.00px;font-weight:400;color:#fff;letter-spacing:-0.200px">10:09:54</div>
<div class="t" style="left:475.60px;top:58.29px;font-size:11.00px;line-height:11.00px;font-weight:400;color:#fff;letter-spacing:-0.330px">026.1880E</div>
<div class="t" style="left:533.60px;top:58.29px;font-size:11.00px;line-height:11.00px;font-weight:400;color:#fff;letter-spacing:-0.060px">4045.4797N</div>
<div class="t" style="left:600.60px;top:58.29px;font-size:11.00px;line-height:11.00px;font-weight:400;color:#fff;letter-spacing:-0.200px">000.00</div>
<div class="t" style="left:646.60px;top:58.29px;font-size:11.00px;line-height:11.00px;font-weight:400;color:#fff;letter-spacing:-0.200px">70.638</div>
<div class="t" style="left:742.40px;top:58.29px;font-size:11.00px;line-height:11.00px;font-weight:400;color:#fff;letter-spacing:-0.200px">198.10</div>
<div class="t" style="left:792.90px;top:58.29px;font-size:11.00px;line-height:11.00px;font-weight:400;color:#fff;letter-spacing:-0.200px">0.00</div>
<div class="t" style="left:864.60px;top:58.29px;font-size:11.00px;line-height:11.00px;font-weight:400;color:#fff;letter-spacing:-0.200px">0.00</div>
<div class="t" style="left:950.00px;top:58.29px;font-size:11.00px;line-height:11.00px;font-weight:400;color:#fff;letter-spacing:-0.200px">0.0</div>
<div class="r" style="left:0px;top:71px;width:1031px;height:1px;background:#cde3f7;"></div>
<div class="t" style="left:3.30px;top:76.29px;font-size:11.00px;line-height:11.00px;font-weight:400;color:#fff;letter-spacing:0.060px">2020-07-19</div>
<div class="t" style="left:68.60px;top:76.29px;font-size:11.00px;line-height:11.00px;font-weight:400;color:#fff;letter-spacing:-0.240px">10:09:17.580</div>
<div class="t" style="left:137.30px;top:76.29px;font-size:11.00px;line-height:11.00px;font-weight:400;color:#fff;letter-spacing:0.000px">1</div>
<div class="t" style="left:172.30px;top:76.29px;font-size:11.00px;line-height:11.00px;font-weight:400;color:#fff;letter-spacing:-0.300px">58</div>
<div class="t" style="left:207.30px;top:76.29px;font-size:11.00px;line-height:11.00px;font-weight:400;color:#fff;letter-spacing:-0.400px">5.31</div>
<div class="t" style="left:242.30px;top:76.29px;font-size:11.00px;line-height:11.00px;font-weight:400;color:#fff;letter-spacing:-0.200px">0.00</div>
<div class="t" style="left:277.30px;top:76.29px;font-size:11.00px;line-height:11.00px;font-weight:400;color:#fff;letter-spacing:-0.200px">0.00</div>
<div class="t" style="left:312.30px;top:76.29px;font-size:11.00px;line-height:11.00px;font-weight:400;color:#fff;letter-spacing:-0.200px">0.00</div>
<div class="t" style="left:347.30px;top:76.29px;font-size:11.00px;line-height:11.00px;font-weight:400;color:#fff;letter-spacing:0.060px">2020-07-19</div>
<div class="t" style="left:413.60px;top:76.29px;font-size:11.00px;line-height:11.00px;font-weight:400;color:#fff;letter-spacing:-0.200px">10:09:54</div>
<div class="t" style="left:475.60px;top:76.29px;font-size:11.00px;line-height:11.00px;font-weight:400;color:#fff;letter-spacing:-0.330px">026.2209E</div>
<div class="t" style="left:533.60px;top:76.29px;font-size:11.00px;line-height:11.00px;font-weight:400;color:#fff;letter-spacing:-0.060px">4045.4776N</div>
<div class="t" style="left:600.60px;top:76.29px;font-size:11.00px;line-height:11.00px;font-weight:400;color:#fff;letter-spacing:-0.200px">000.00</div>
<div class="t" style="left:646.60px;top:76.29px;font-size:11.00px;line-height:11.00px;font-weight:400;color:#fff;letter-spacing:-0.200px">72.317</div>
<div class="t" style="left:742.40px;top:76.29px;font-size:11.00px;line-height:11.00px;font-weight:400;color:#fff;letter-spacing:-0.200px">195.80</div>
<div class="t" style="left:792.90px;top:76.29px;font-size:11.00px;line-height:11.00px;font-weight:400;color:#fff;letter-spacing:-0.200px">0.00</div>
<div class="t" style="left:864.60px;top:76.29px;font-size:11.00px;line-height:11.00px;font-weight:400;color:#fff;letter-spacing:-0.200px">0.00</div>
<div class="t" style="left:950.00px;top:76.29px;font-size:11.00px;line-height:11.00px;font-weight:400;color:#fff;letter-spacing:-0.200px">0.0</div>
<div class="r" style="left:0px;top:89px;width:1031px;height:1px;background:#cde3f7;"></div>
<div class="t" style="left:3.30px;top:94.29px;font-size:11.00px;line-height:11.00px;font-weight:400;color:#fff;letter-spacing:0.060px">2020-07-19</div>
<div class="t" style="left:68.60px;top:94.29px;font-size:11.00px;line-height:11.00px;font-weight:400;color:#fff;letter-spacing:-0.240px">10:09:18.600</div>
<div class="t" style="left:137.30px;top:94.29px;font-size:11.00px;line-height:11.00px;font-weight:400;color:#fff;letter-spacing:0.000px">0</div>
<div class="t" style="left:172.30px;top:94.29px;font-size:11.00px;line-height:11.00px;font-weight:400;color:#fff;letter-spacing:-0.300px">61</div>
<div class="t" style="left:207.30px;top:94.29px;font-size:11.00px;line-height:11.00px;font-weight:400;color:#fff;letter-spacing:-0.400px">5.31</div>
<div class="t" style="left:242.30px;top:94.29px;font-size:11.00px;line-height:11.00px;font-weight:400;color:#fff;letter-spacing:-0.200px">0.00</div>
<div class="t" style="left:277.30px;top:94.29px;font-size:11.00px;line-height:11.00px;font-weight:400;color:#fff;letter-spacing:-0.200px">0.00</div>
<div class="t" style="left:312.30px;top:94.29px;font-size:11.00px;line-height:11.00px;font-weight:400;color:#fff;letter-spacing:-0.200px">0.00</div>
<div class="t" style="left:347.30px;top:94.29px;font-size:11.00px;line-height:11.00px;font-weight:400;color:#fff;letter-spacing:0.060px">2020-07-19</div>
<div class="t" style="left:413.60px;top:94.29px;font-size:11.00px;line-height:11.00px;font-weight:400;color:#fff;letter-spacing:-0.200px">10:09:54</div>
<div class="t" style="left:475.60px;top:94.29px;font-size:11.00px;line-height:11.00px;font-weight:400;color:#fff;letter-spacing:-0.330px">026.2401E</div>
<div class="t" style="left:533.60px;top:94.29px;font-size:11.00px;line-height:11.00px;font-weight:400;color:#fff;letter-spacing:-0.060px">4045.4843N</div>
<div class="t" style="left:600.60px;top:94.29px;font-size:11.00px;line-height:11.00px;font-weight:400;color:#fff;letter-spacing:-0.200px">000.00</div>
<div class="t" style="left:646.60px;top:94.29px;font-size:11.00px;line-height:11.00px;font-weight:400;color:#fff;letter-spacing:-0.200px">80.276</div>
<div class="t" style="left:742.40px;top:94.29px;font-size:11.00px;line-height:11.00px;font-weight:400;color:#fff;letter-spacing:-0.200px">190.20</div>
<div class="t" style="left:792.90px;top:94.29px;font-size:11.00px;line-height:11.00px;font-weight:400;color:#fff;letter-spacing:-0.200px">0.00</div>
<div class="t" style="left:864.60px;top:94.29px;font-size:11.00px;line-height:11.00px;font-weight:400;color:#fff;letter-spacing:-0.200px">0.00</div>
<div class="t" style="left:950.00px;top:94.29px;font-size:11.00px;line-height:11.00px;font-weight:400;color:#fff;letter-spacing:-0.200px">0.0</div>
<div class="r" style="left:0px;top:107px;width:1031px;height:1px;background:#cde3f7;"></div>
<div class="t" style="left:3.30px;top:112.29px;font-size:11.00px;line-height:11.00px;font-weight:400;color:#fff;letter-spacing:0.060px">2020-07-19</div>
<div class="t" style="left:68.60px;top:112.29px;font-size:11.00px;line-height:11.00px;font-weight:400;color:#fff;letter-spacing:-0.240px">10:09:19.610</div>
<div class="t" style="left:137.30px;top:112.29px;font-size:11.00px;line-height:11.00px;font-weight:400;color:#fff;letter-spacing:0.000px">1</div>
<div class="t" style="left:172.30px;top:112.29px;font-size:11.00px;line-height:11.00px;font-weight:400;color:#fff;letter-spacing:-0.300px">58</div>
<div class="t" style="left:207.30px;top:112.29px;font-size:11.00px;line-height:11.00px;font-weight:400;color:#fff;letter-spacing:-0.400px">5.31</div>
<div class="t" style="left:242.30px;top:112.29px;font-size:11.00px;line-height:11.00px;font-weight:400;color:#fff;letter-spacing:-0.200px">0.00</div>
<div class="t" style="left:277.30px;top:112.29px;font-size:11.00px;line-height:11.00px;font-weight:400;color:#fff;letter-spacing:-0.200px">0.00</div>
<div class="t" style="left:312.30px;top:112.29px;font-size:11.00px;line-height:11.00px;font-weight:400;color:#fff;letter-spacing:-0.200px">0.00</div>
<div class="t" style="left:347.30px;top:112.29px;font-size:11.00px;line-height:11.00px;font-weight:400;color:#fff;letter-spacing:0.060px">2020-07-19</div>
<div class="t" style="left:413.60px;top:112.29px;font-size:11.00px;line-height:11.00px;font-weight:400;color:#fff;letter-spacing:-0.200px">10:09:54</div>
<div class="t" style="left:475.60px;top:112.29px;font-size:11.00px;line-height:11.00px;font-weight:400;color:#fff;letter-spacing:-0.330px">026.2596E</div>
<div class="t" style="left:533.60px;top:112.29px;font-size:11.00px;line-height:11.00px;font-weight:400;color:#fff;letter-spacing:-0.060px">4045.4997N</div>
<div class="t" style="left:600.60px;top:112.29px;font-size:11.00px;line-height:11.00px;font-weight:400;color:#fff;letter-spacing:-0.200px">000.00</div>
<div class="t" style="left:646.60px;top:112.29px;font-size:11.00px;line-height:11.00px;font-weight:400;color:#fff;letter-spacing:-0.200px">71.553</div>
<div class="t" style="left:742.40px;top:112.29px;font-size:11.00px;line-height:11.00px;font-weight:400;color:#fff;letter-spacing:-0.200px">181.70</div>
<div class="t" style="left:792.90px;top:112.29px;font-size:11.00px;line-height:11.00px;font-weight:400;color:#fff;letter-spacing:-0.200px">0.00</div>
<div class="t" style="left:864.60px;top:112.29px;font-size:11.00px;line-height:11.00px;font-weight:400;color:#fff;letter-spacing:-0.200px">0.00</div>
<div class="t" style="left:950.00px;top:112.29px;font-size:11.00px;line-height:11.00px;font-weight:400;color:#fff;letter-spacing:-0.200px">0.0</div>
<div class="r" style="left:0px;top:125px;width:1031px;height:1px;background:#cde3f7;"></div>
<div class="t" style="left:3.30px;top:130.29px;font-size:11.00px;line-height:11.00px;font-weight:400;color:#fff;letter-spacing:0.060px">2020-07-19</div>
<div class="t" style="left:68.60px;top:130.29px;font-size:11.00px;line-height:11.00px;font-weight:400;color:#fff;letter-spacing:-0.240px">10:09:20.630</div>
<div class="t" style="left:137.30px;top:130.29px;font-size:11.00px;line-height:11.00px;font-weight:400;color:#fff;letter-spacing:0.000px">1</div>
<div class="t" style="left:172.30px;top:130.29px;font-size:11.00px;line-height:11.00px;font-weight:400;color:#fff;letter-spacing:-0.300px">46</div>
<div class="t" style="left:207.30px;top:130.29px;font-size:11.00px;line-height:11.00px;font-weight:400;color:#fff;letter-spacing:-0.400px">5.31</div>
<div class="t" style="left:242.30px;top:130.29px;font-size:11.00px;line-height:11.00px;font-weight:400;color:#fff;letter-spacing:-0.200px">0.00</div>
<div class="t" style="left:277.30px;top:130.29px;font-size:11.00px;line-height:11.00px;font-weight:400;color:#fff;letter-spacing:-0.200px">0.00</div>
<div class="t" style="left:312.30px;top:130.29px;font-size:11.00px;line-height:11.00px;font-weight:400;color:#fff;letter-spacing:-0.200px">0.00</div>
<div class="t" style="left:347.30px;top:130.29px;font-size:11.00px;line-height:11.00px;font-weight:400;color:#fff;letter-spacing:0.060px">2020-07-19</div>
<div class="t" style="left:413.60px;top:130.29px;font-size:11.00px;line-height:11.00px;font-weight:400;color:#fff;letter-spacing:-0.200px">10:09:54</div>
<div class="t" style="left:475.60px;top:130.29px;font-size:11.00px;line-height:11.00px;font-weight:400;color:#fff;letter-spacing:-0.330px">026.2704E</div>
<div class="t" style="left:533.60px;top:130.29px;font-size:11.00px;line-height:11.00px;font-weight:400;color:#fff;letter-spacing:-0.060px">4045.5176N</div>
<div class="t" style="left:600.60px;top:130.29px;font-size:11.00px;line-height:11.00px;font-weight:400;color:#fff;letter-spacing:-0.200px">000.00</div>
<div class="t" style="left:646.60px;top:130.29px;font-size:11.00px;line-height:11.00px;font-weight:400;color:#fff;letter-spacing:-0.200px">65.718</div>
<div class="t" style="left:742.40px;top:130.29px;font-size:11.00px;line-height:11.00px;font-weight:400;color:#fff;letter-spacing:-0.200px">178.20</div>
<div class="t" style="left:792.90px;top:130.29px;font-size:11.00px;line-height:11.00px;font-weight:400;color:#fff;letter-spacing:-0.200px">0.00</div>
<div class="t" style="left:864.60px;top:130.29px;font-size:11.00px;line-height:11.00px;font-weight:400;color:#fff;letter-spacing:-0.200px">0.00</div>
<div class="t" style="left:950.00px;top:130.29px;font-size:11.00px;line-height:11.00px;font-weight:400;color:#fff;letter-spacing:-0.200px">0.0</div>
<div class="r" style="left:0px;top:143px;width:1031px;height:1px;background:#cde3f7;"></div>
<div class="t" style="left:3.30px;top:148.29px;font-size:11.00px;line-height:11.00px;font-weight:400;color:#fff;letter-spacing:0.060px">2020-07-19</div>
<div class="t" style="left:68.60px;top:148.29px;font-size:11.00px;line-height:11.00px;font-weight:400;color:#fff;letter-spacing:-0.240px">10:09:21.640</div>
<div class="t" style="left:137.30px;top:148.29px;font-size:11.00px;line-height:11.00px;font-weight:400;color:#fff;letter-spacing:0.000px">0</div>
<div class="t" style="left:172.30px;top:148.29px;font-size:11.00px;line-height:11.00px;font-weight:400;color:#fff;letter-spacing:-0.300px">67</div>
<div class="t" style="left:207.30px;top:148.29px;font-size:11.00px;line-height:11.00px;font-weight:400;color:#fff;letter-spacing:-0.400px">5.31</div>
<div class="t" style="left:242.30px;top:148.29px;font-size:11.00px;line-height:11.00px;font-weight:400;color:#fff;letter-spacing:-0.200px">0.00</div>
<div class="t" style="left:277.30px;top:148.29px;font-size:11.00px;line-height:11.00px;font-weight:400;color:#fff;letter-spacing:-0.200px">0.00</div>
<div class="t" style="left:312.30px;top:148.29px;font-size:11.00px;line-height:11.00px;font-weight:400;color:#fff;letter-spacing:-0.200px">0.00</div>
<div class="t" style="left:347.30px;top:148.29px;font-size:11.00px;line-height:11.00px;font-weight:400;color:#fff;letter-spacing:0.060px">2020-07-19</div>
<div class="t" style="left:413.60px;top:148.29px;font-size:11.00px;line-height:11.00px;font-weight:400;color:#fff;letter-spacing:-0.200px">10:10:04</div>
<div class="t" style="left:475.60px;top:148.29px;font-size:11.00px;line-height:11.00px;font-weight:400;color:#fff;letter-spacing:-0.330px">026.2750E</div>
<div class="t" style="left:533.60px;top:148.29px;font-size:11.00px;line-height:11.00px;font-weight:400;color:#fff;letter-spacing:-0.060px">4045.5373N</div>
<div class="t" style="left:600.60px;top:148.29px;font-size:11.00px;line-height:11.00px;font-weight:400;color:#fff;letter-spacing:-0.200px">000.00</div>
<div class="t" style="left:646.60px;top:148.29px;font-size:11.00px;line-height:11.00px;font-weight:400;color:#fff;letter-spacing:-0.200px">65.838</div>
<div class="t" style="left:742.40px;top:148.29px;font-size:11.00px;line-height:11.00px;font-weight:400;color:#fff;letter-spacing:-0.200px">187.50</div>
<div class="t" style="left:792.90px;top:148.29px;font-size:11.00px;line-height:11.00px;font-weight:400;color:#fff;letter-spacing:-0.200px">0.00</div>
<div class="t" style="left:864.60px;top:148.29px;font-size:11.00px;line-height:11.00px;font-weight:400;color:#fff;letter-spacing:-0.200px">0.00</div>
<div class="t" style="left:950.00px;top:148.29px;font-size:11.00px;line-height:11.00px;font-weight:400;color:#fff;letter-spacing:-0.200px">0.0</div>
<div class="r" style="left:0px;top:161px;width:1031px;height:1px;background:#cde3f7;"></div>
<div class="r" style="left:64px;top:0px;width:1px;height:150px;background:#cde3f7;"></div>
<div class="r" style="left:134px;top:0px;width:1px;height:150px;background:#cde3f7;"></div>
<div class="r" style="left:169px;top:0px;width:1px;height:150px;background:#cde3f7;"></div>
<div class="r" style="left:204px;top:0px;width:1px;height:150px;background:#cde3f7;"></div>
<div class="r" style="left:239px;top:0px;width:1px;height:150px;background:#cde3f7;"></div>
<div class="r" style="left:274px;top:0px;width:1px;height:150px;background:#cde3f7;"></div>
<div class="r" style="left:309px;top:0px;width:1px;height:150px;background:#cde3f7;"></div>
<div class="r" style="left:344px;top:0px;width:1px;height:150px;background:#cde3f7;"></div>
<div class="r" style="left:409px;top:0px;width:1px;height:150px;background:#cde3f7;"></div>
<div class="r" style="left:471px;top:0px;width:1px;height:150px;background:#cde3f7;"></div>
<div class="r" style="left:529px;top:0px;width:1px;height:150px;background:#cde3f7;"></div>
<div class="r" style="left:596px;top:0px;width:1px;height:150px;background:#cde3f7;"></div>
<div class="r" style="left:642px;top:0px;width:1px;height:150px;background:#cde3f7;"></div>
<div class="r" style="left:736px;top:0px;width:1px;height:150px;background:#cde3f7;"></div>
<div class="r" style="left:786px;top:0px;width:1px;height:150px;background:#cde3f7;"></div>
<div class="r" style="left:857px;top:0px;width:1px;height:150px;background:#cde3f7;"></div>
<div class="r" style="left:947px;top:0px;width:1px;height:150px;background:#cde3f7;"></div>
</div>
<div class="r" style="left:1171px;top:603px;width:16px;height:173px;background:#f0f0f0;"></div>
<div class="r" style="left:1171px;top:634px;width:16px;height:18px;background:#cdcdcd;"></div>
<svg class="r" style="left:1174px;top:609px" width="11" height="7" viewBox="0 0 11 7"><path d="M2.2 5.6 L5.5 2.2 L8.8 5.6" stroke="#585858" stroke-width="1.9" fill="none"/></svg>
<svg class="r" style="left:1174px;top:764px" width="11" height="7" viewBox="0 0 11 7"><path d="M2.2 1.4 L5.5 4.8 L8.8 1.4" stroke="#585858" stroke-width="1.9" fill="none"/></svg>
<div class="r" style="left:139px;top:776px;width:1048px;height:17px;background:#f0f0f0;"></div>
<div class="r" style="left:156px;top:777px;width:429px;height:15px;background:#cdcdcd;"></div>
<div class="r" style="left:365px;top:780px;width:10px;height:9px;background:#eaeaea;"></div>
<svg class="r" style="left:144px;top:779px" width="7" height="11" viewBox="0 0 7 11"><path d="M5.6 2.2 L2.2 5.5 L5.6 8.8" stroke="#585858" stroke-width="1.9" fill="none"/></svg>
<svg class="r" style="left:1158px;top:779px" width="7" height="11" viewBox="0 0 7 11"><path d="M1.4 2.2 L4.8 5.5 L1.4 8.8" stroke="#585858" stroke-width="1.9" fill="none"/></svg>
<div class="r" style="left:1194px;top:795px;width:2px;height:2px;background:#b8b8b8;"></div>
<div class="r" style="left:1191px;top:798px;width:2px;height:2px;background:#b8b8b8;"></div>
<div class="r" style="left:1194px;top:798px;width:2px;height:2px;background:#b8b8b8;"></div>
<div class="r" style="left:1188px;top:801px;width:2px;height:2px;background:#b8b8b8;"></div>
<div class="r" style="left:1191px;top:801px;width:2px;height:2px;background:#b8b8b8;"></div>
<div class="r" style="left:1194px;top:801px;width:2px;height:2px;background:#b8b8b8;"></div>
</body></html>
